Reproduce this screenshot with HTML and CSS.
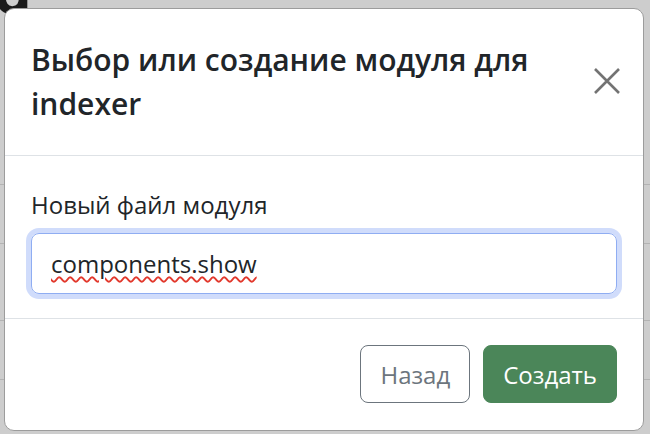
FILE: index.html
```html
<!DOCTYPE html>
<html lang="ru">
<head>
<meta charset="utf-8">
<title>Модуль</title>
<link rel="stylesheet" href="styles.css">
</head>
<body>
<div class="page">
  <div class="page-title">d</div>
  <div class="page-rows">
    <div class="page-row r1"></div>
    <div class="page-row r2"></div>
    <div class="page-row r3"></div>
    <div class="page-row r4"></div>
  </div>
</div>
<div class="modal">
  <div class="modal-header">
    <h5 class="modal-title">Выбор или создание модуля для indexer</h5>
    <button class="btn-close" type="button" aria-label="Закрыть">
      <svg width="26" height="26" viewBox="0 0 26 26"><path d="M1 1 L25 25 M25 1 L1 25" stroke="#737373" stroke-width="2.6" fill="none"/></svg>
    </button>
  </div>
  <div class="modal-body">
    <label class="form-label">Новый файл модуля</label>
    <div class="form-control"><span class="misspelled">components.show</span></div>
  </div>
  <div class="modal-footer">
    <button class="btn btn-outline" type="button">Назад</button>
    <button class="btn btn-success" type="button">Создать</button>
  </div>
</div>
</body>
</html>
```

FILE: styles.css
```css
html, body {
  margin: 0;
  padding: 0;
}
body {
  background: #cdcdcd;
  font-family: "Open Sans", "Noto Sans", sans-serif;
  color: #212529;
  width: 650px;
  height: 434px;
  overflow: hidden;
}
.page {
  position: relative;
  height: 434px;
}
.page-title {
  position: absolute;
  left: -6px;
  top: -40px;
  font-size: 60px;
  font-weight: 700;
  line-height: 60px;
  color: #1a1a1a;
}
.page-rows {
  padding-top: 184px;
}
.page-row {
  border-top: 1px solid #b3b3b3;
}
.r1 { height: 58px; }
.r2 { height: 76px; }
.r3 { height: 58px; }
.r4 { height: 40px; }

.modal {
  position: fixed;
  left: 4px;
  top: 8px;
  width: 640px;
  box-sizing: border-box;
  background: #fff;
  border: 1px solid #9c9c9c;
  border-radius: 10px;
}
.modal-header {
  display: flex;
  align-items: center;
  padding: 29px 23px 29px 26px;
  border-bottom: 1px solid #dee2e6;
}
.modal-title {
  flex: 1;
  margin: 0;
  font-size: 30px;
  font-weight: 600;
  line-height: 44px;
  color: #212529;
  padding-right: 40px;
}
.btn-close {
  display: flex;
  padding: 0;
  border: 0;
  background: transparent;
  margin-top: -3px;
}
.modal-body {
  padding: 31px 26px 24px;
}
.form-label {
  display: block;
  font-size: 24px;
  line-height: 36px;
  margin-bottom: 10px;
  color: #212529;
}
.form-control {
  height: 61px;
  box-sizing: border-box;
  border: 1px solid #8fadf2;
  border-radius: 8px;
  box-shadow: 0 0 0 5px #d0dcfb;
  padding: 0 19px;
  display: flex;
  align-items: center;
  font-size: 24px;
  color: #212529;
}
.misspelled {
  text-decoration: underline wavy #e2382c;
  text-decoration-thickness: 1.5px;
  text-underline-offset: 3px;
}
.modal-footer {
  display: flex;
  justify-content: flex-end;
  gap: 13px;
  padding: 26px 26px 27px;
  border-top: 1px solid #dee2e6;
}
.btn {
  height: 58px;
  box-sizing: border-box;
  border-radius: 8px;
  font-family: inherit;
  font-size: 24px;
  padding: 0 19px;
  cursor: pointer;
}
.btn-outline {
  background: #fff;
  border: 1px solid #6c757d;
  color: #6c757d;
}
.btn-success {
  background: #4b8659;
  border: 1px solid #4b8659;
  color: #fff;
}
```
